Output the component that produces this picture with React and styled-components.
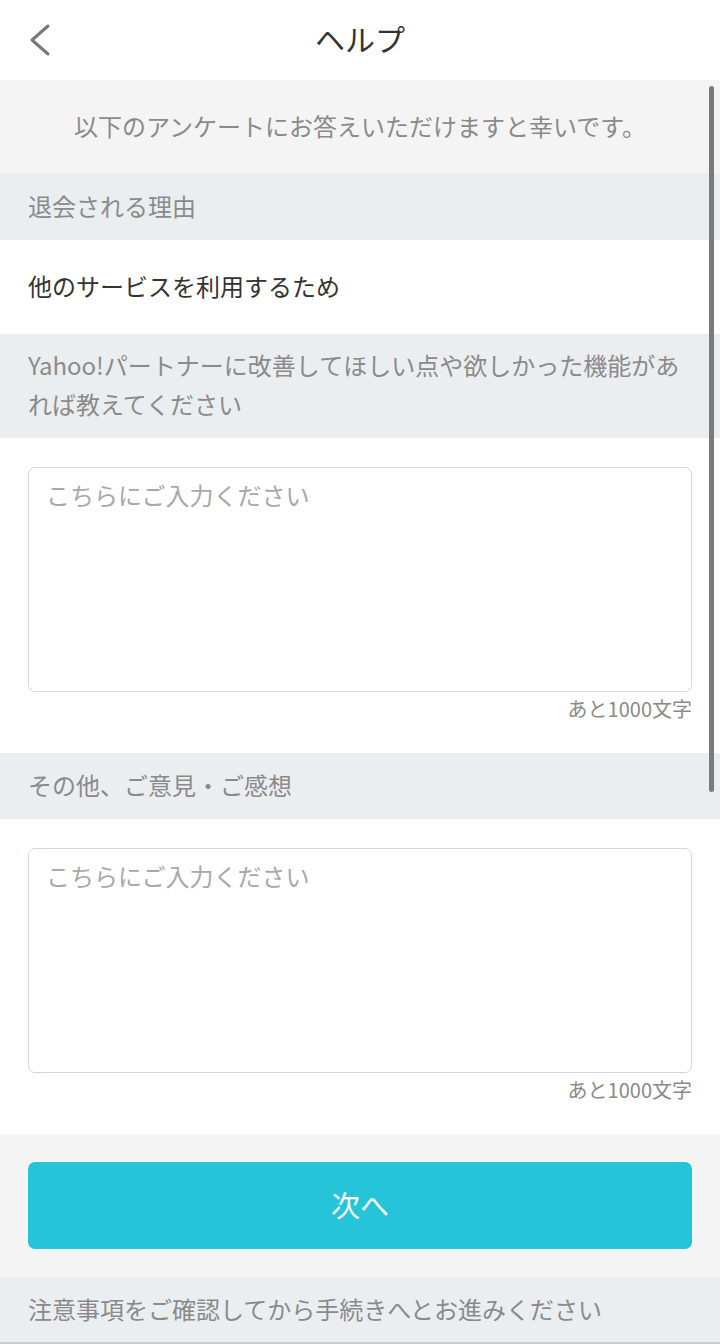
import React from "react";
import styled, { createGlobalStyle } from "styled-components";

const Global = createGlobalStyle`
  * { box-sizing: border-box; }
  html, body { margin: 0; padding: 0; background: #ffffff; }
  body {
    font-family: "Noto Sans CJK JP", "Noto Sans", "Liberation Sans", sans-serif;
    -webkit-font-smoothing: antialiased;
  }
`;

const Page = styled.div`
  position: relative;
  width: 720px;
  min-height: 1344px;
  display: flex;
  flex-direction: column;
  background: #ffffff;
  overflow: hidden;
`;

const Header = styled.header`
  height: 80px;
  display: grid;
  grid-template-columns: 80px 1fr 80px;
  align-items: center;
  background: #ffffff;
`;

const BackButton = styled.button`
  border: 0;
  background: none;
  padding: 0 0 0 26px;
  height: 80px;
  display: flex;
  align-items: center;
  cursor: pointer;
`;

const Title = styled.h1`
  margin: 0;
  text-align: center;
  font-size: 30px;
  font-weight: 400;
  color: #333333;
  line-height: 76px;
  padding-bottom: 4px;
`;

const Intro = styled.div`
  height: 94px;
  display: flex;
  align-items: center;
  justify-content: center;
  padding-bottom: 4px;
  background: #f4f4f4;
  color: #8a8a8a;
  font-size: 24px;
`;

const SectionHead = styled.div`
  background: #ebeef1;
  color: #8a8a8a;
  font-size: 24px;
  line-height: 39px;
  padding: ${(p) => (p.$multi ? "11px 28px 15px" : "11.5px 28px 15.5px")};
`;

const AnswerRow = styled.div`
  height: 94px;
  display: flex;
  align-items: center;
  padding: 0 28px 4px;
  color: #333333;
  font-size: 24px;
  background: #ffffff;
`;

const InputBlock = styled.div`
  display: flex;
  flex-direction: column;
  padding: 29px 28px 29px;
  background: #ffffff;
`;

const TextArea = styled.textarea`
  display: block;
  width: 100%;
  height: 225px;
  resize: none;
  border: 1.5px solid #cfd9dc;
  border-radius: 7px;
  padding: 9px 17px;
  font-family: inherit;
  font-size: 24px;
  line-height: 1.5;
  color: #333333;
  background: #ffffff;
  outline: none;
  &::placeholder {
    color: #a8a8a8;
  }
`;

const Counter = styled.div`
  margin-top: 3px;
  padding-bottom: 1px;
  text-align: right;
  font-size: 20px;
  line-height: 28px;
  color: #8a8a8a;
`;

const ButtonBand = styled.div`
  padding: 28px 28px;
  background: #f4f4f4;
`;

const NextButton = styled.button`
  width: 100%;
  height: 87px;
  border: 0;
  border-radius: 7px;
  background: #25c4d8;
  color: #ffffff;
  font-family: inherit;
  font-size: 29px;
  padding: 0 0 4px;
  cursor: pointer;
`;

const Notice = styled.div`
  height: 67px;
  display: flex;
  align-items: center;
  padding: 0 28px 2px;
  background: #ebeef1;
  border-bottom: 2px solid #c9cccf;
  color: #8a8a8a;
  font-size: 24px;
`;

const ScrollThumb = styled.div`
  position: absolute;
  top: 86px;
  right: 6px;
  width: 5px;
  height: 706px;
  border-radius: 3px;
  background: #7a7a7a;
`;

function Chevron() {
  return (
    <svg width="26" height="34" viewBox="0 0 26 34" fill="none">
      <path d="M22 3 L6 17 L22 31" stroke="#777777" strokeWidth="3" strokeLinecap="round" strokeLinejoin="round" />
    </svg>
  );
}

export default function App() {
  return (
    <>
      <Global />
      <Page>
        <Header>
          <BackButton aria-label="戻る">
            <Chevron />
          </BackButton>
          <Title>ヘルプ</Title>
          <span />
        </Header>
        <Intro>以下のアンケートにお答えいただけますと幸いです。</Intro>
        <SectionHead>退会される理由</SectionHead>
        <AnswerRow>他のサービスを利用するため</AnswerRow>
        <SectionHead $multi>
          Yahoo!パートナーに改善してほしい点や欲しかった機能があ
          <br />
          れば教えてください
        </SectionHead>
        <InputBlock>
          <TextArea placeholder="こちらにご入力ください" />
          <Counter>あと1000文字</Counter>
        </InputBlock>
        <SectionHead>その他、ご意見・ご感想</SectionHead>
        <InputBlock>
          <TextArea placeholder="こちらにご入力ください" />
          <Counter>あと1000文字</Counter>
        </InputBlock>
        <ButtonBand>
          <NextButton>次へ</NextButton>
        </ButtonBand>
        <Notice>注意事項をご確認してから手続きへとお進みください</Notice>
        <ScrollThumb />
      </Page>
    </>
  );
}
